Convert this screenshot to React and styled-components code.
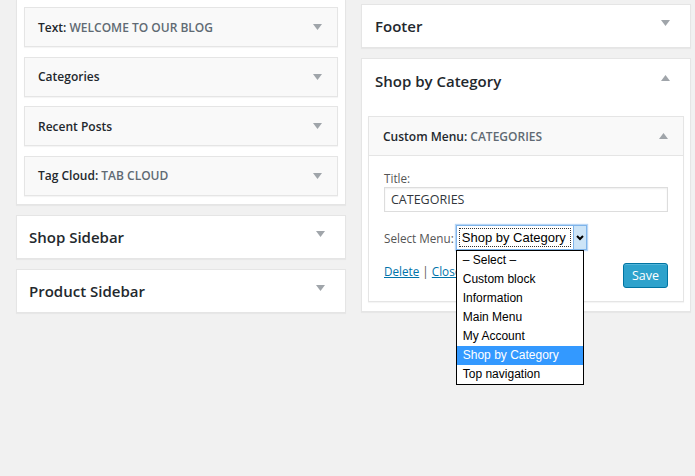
import styled, { createGlobalStyle } from "styled-components";

const GlobalStyle = createGlobalStyle`
  body {
    margin: 0;
    background: #f1f1f1;
    font-family: "Open Sans", "Liberation Sans", sans-serif;
    color: #23282d;
  }
`;

const Page = styled.div`
  display: flex;
  align-items: flex-start;
  gap: 15px;
  padding-left: 16px;
  width: 695px;
  height: 476px;
  box-sizing: border-box;
  overflow: hidden;
`;

const Column = styled.div`
  width: 330px;
  display: flex;
  flex-direction: column;
  gap: 10px;
  padding-top: ${(p) => p.$top || 0}px;
`;

const Panel = styled.div`
  background: #fff;
  border: 1px solid #e5e5e5;
  box-shadow: 0 1px 1px rgba(0, 0, 0, 0.04);
  box-sizing: border-box;
`;

const OpenSidebar = styled(Panel)`
  border-top: none;
  padding: 7px 7px 8px;
  display: flex;
  flex-direction: column;
  gap: 9.6px;
`;

const WidgetArea = styled(Panel)`
  padding: 0 6px 9px;
`;

const SidebarHead = styled.div`
  height: ${(p) => p.$h || 42}px;
  display: flex;
  align-items: center;
  justify-content: space-between;
  padding: 0 20px 0 ${(p) => p.$pl || 12}px;
  margin: ${(p) => (p.$inset ? "0 -6px 13px" : "0")};
  font-size: 15px;
  font-weight: 600;
  color: #23282d;
  & > svg {
    margin-top: -6px;
  }
`;

const Widget = styled.div`
  background: #f9f9f9;
  border: 1px solid #e5e5e5;
  box-shadow: 0 1px 1px rgba(0, 0, 0, 0.04);
  box-sizing: border-box;
`;

const WidgetHead = styled.div`
  height: 38px;
  display: flex;
  align-items: center;
  justify-content: space-between;
  padding: 0 15px 0 ${(p) => p.$pl || 13}px;
  font-size: 12px;
  font-weight: 600;
  color: #23282d;
  box-sizing: ${(p) => (p.$open ? "content-box" : "border-box")};
  border-bottom: ${(p) => (p.$open ? "1px solid #e5e5e5" : "none")};
  span {
    color: #606a73;
  }
`;

const WidgetBody = styled.div`
  background: #fff;
  padding: 14px 15px 13px;
  font-size: 11.7px;
  color: #555;
`;

const Label = styled.div`
  line-height: 17px;
`;

const TextInput = styled.div`
  height: 25px;
  border: 1px solid #ddd;
  box-shadow: inset 0 1px 2px rgba(0, 0, 0, 0.07);
  box-sizing: border-box;
  display: flex;
  align-items: center;
  padding-left: 6px;
  font-size: 12.5px;
  color: #32373c;
`;

const SelectRow = styled.div`
  display: flex;
  align-items: center;
  margin-top: 13px;
  gap: 2px;
`;

const SelectWrap = styled.div`
  position: relative;
`;

const Select = styled.div`
  width: 131px;
  height: 25px;
  border: 1px solid #7eb4ea;
  box-shadow: 0 0 1px 1px #b9d6f5;
  box-sizing: border-box;
  display: flex;
  background: #fff;
`;

const SelectValue = styled.div`
  flex: 1;
  margin: 2px;
  border: 1px dotted #333;
  font-family: "Liberation Sans", Arial, sans-serif;
  font-size: 13px;
  color: #000;
  display: flex;
  align-items: center;
  padding-left: 2px;
  white-space: nowrap;
  overflow: hidden;
`;

const SelectButton = styled.div`
  width: 12px;
  background: #cce4f7;
  border-left: 1px solid #7eb4ea;
  display: flex;
  align-items: center;
  justify-content: center;
`;

const Dropdown = styled.ul`
  position: absolute;
  left: 0;
  top: 25px;
  width: 128px;
  margin: 0;
  padding: 0;
  list-style: none;
  border: 1px solid #000;
  background: #fff;
  box-sizing: border-box;
  z-index: 5;
`;

const Option = styled.li`
  height: 19px;
  line-height: 19px;
  padding-left: 6px;
  font-family: "Liberation Sans", Arial, sans-serif;
  font-size: 12px;
  color: ${(p) => (p.$active ? "#fff" : "#000")};
  background: ${(p) => (p.$active ? "#3399ff" : "transparent")};
`;

const Actions = styled.div`
  display: flex;
  align-items: flex-start;
  justify-content: space-between;
  margin-top: 13px;
`;

const Links = styled.div`
  color: #555;
  line-height: 16px;
  a {
    color: #0073aa;
    text-decoration: underline;
  }
`;

const SaveButton = styled.button`
  height: 25px;
  width: 45px;
  padding: 0;
  background: #2ea2cc;
  border: 1px solid #0074a2;
  border-radius: 3px;
  box-shadow: inset 0 1px 0 rgba(120, 200, 230, 0.5);
  color: #fff;
  font-family: "Open Sans", sans-serif;
  font-size: 12.5px;
`;

const Caret = ({ up }) => (
  <svg width="9" height="6" viewBox="0 0 9 6">
    <path d={up ? "M0 6 L4.5 0 L9 6 Z" : "M0 0 L9 0 L4.5 6 Z"} fill="#a0a5aa" />
  </svg>
);

const Chevron = () => (
  <svg width="8" height="6" viewBox="0 0 8 6">
    <path d="M1 1 L4 4 L7 1" stroke="#000" strokeWidth="2" fill="none" />
  </svg>
);

const widgets = [
  ["Text:", "WELCOME TO OUR BLOG"],
  ["Categories", ""],
  ["Recent Posts", ""],
  ["Tag Cloud:", "TAB CLOUD"],
];

const options = [
  "– Select –",
  "Custom block",
  "Information",
  "Main Menu",
  "My Account",
  "Shop by Category",
  "Top navigation",
];

export default function App() {
  return (
    <>
      <GlobalStyle />
      <Page>
        <Column>
          <OpenSidebar>
            {widgets.map(([name, title]) => (
              <Widget key={name}>
                <WidgetHead>
                  <div>
                    {name} {title && <span>{title}</span>}
                  </div>
                  <Caret />
                </WidgetHead>
              </Widget>
            ))}
          </OpenSidebar>
          <Panel>
            <SidebarHead>
              Shop Sidebar
              <Caret />
            </SidebarHead>
          </Panel>
          <Panel>
            <SidebarHead>
              Product Sidebar
              <Caret />
            </SidebarHead>
          </Panel>
        </Column>
        <Column $top={4}>
          <Panel>
            <SidebarHead $pl={13}>
              Footer
              <Caret />
            </SidebarHead>
          </Panel>
          <WidgetArea>
            <SidebarHead $h={44} $pl={13} $inset>
              Shop by Category
              <Caret up />
            </SidebarHead>
            <Widget>
              <WidgetHead $open $pl={14}>
                <div>
                  Custom Menu: <span>CATEGORIES</span>
                </div>
                <Caret up />
              </WidgetHead>
              <WidgetBody>
                <Label>Title:</Label>
                <TextInput>CATEGORIES</TextInput>
                <SelectRow>
                  Select Menu:
                  <SelectWrap>
                    <Select>
                      <SelectValue>Shop by Category</SelectValue>
                      <SelectButton>
                        <Chevron />
                      </SelectButton>
                    </Select>
                    <Dropdown>
                      {options.map((o) => (
                        <Option key={o} $active={o === "Shop by Category"}>
                          {o}
                        </Option>
                      ))}
                    </Dropdown>
                  </SelectWrap>
                </SelectRow>
                <Actions>
                  <Links>
                    <a>Delete</a> | <a>Close</a>
                  </Links>
                  <SaveButton>Save</SaveButton>
                </Actions>
              </WidgetBody>
            </Widget>
          </WidgetArea>
        </Column>
      </Page>
    </>
  );
}
